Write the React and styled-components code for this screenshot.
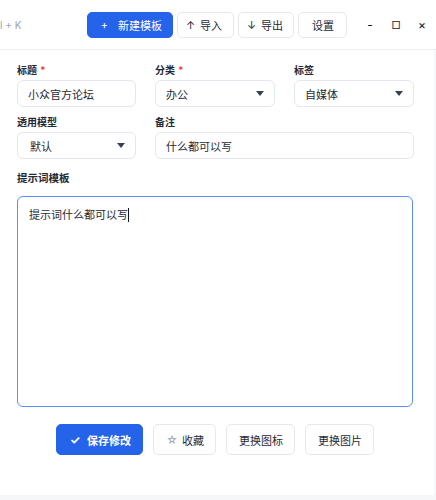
import React from 'react';
import styled, { createGlobalStyle } from 'styled-components';

const GlobalStyle = createGlobalStyle`
  html, body {
    margin: 0;
    padding: 0;
    background: #f6f7f9;
    font-family: "Inter", "Noto Sans CJK SC", sans-serif;
    color: #1f2937;
  }
`;

const Page = styled.div`
  width: 436px;
  height: 500px;
  display: flex;
  flex-direction: column;
  overflow: hidden;
`;

const TopBar = styled.div`
  height: 49px;
  flex-shrink: 0;
  display: flex;
  align-items: center;
  background: #ffffff;
  border-bottom: 1px solid #eceef2;
  overflow: hidden;
`;

const Shortcut = styled.span`
  width: 87px;
  flex-shrink: 0;
  font-size: 10px;
  color: #9ca3af;
  white-space: nowrap;
  padding-top: 1px;
`;

const ToolGroup = styled.div`
  display: flex;
  gap: 4px;
  flex-shrink: 0;
`;

const ToolButton = styled.button`
  height: 26px;
  box-sizing: border-box;
  flex-shrink: 0;
  white-space: nowrap;
  padding: 0 ${p => p.$right || 11}px 0 ${p => p.$left || 11}px;
  border-radius: 5px;
  border: 1px solid ${p => (p.$primary ? '#2563eb' : '#e5e8ee')};
  background: ${p => (p.$primary ? '#2563eb' : '#ffffff')};
  color: ${p => (p.$primary ? '#ffffff' : '#1f2937')};
  font-family: "Inter", "Noto Sans CJK SC", sans-serif;
  font-size: 11px;
  display: flex;
  align-items: center;
  gap: ${p => p.$gap || 8}px;
  cursor: pointer;
`;

const Glyph = styled.span`
  width: ${p => p.$w || 6}px;
  display: inline-flex;
  justify-content: center;
  font-size: ${p => p.$size || 11}px;
  color: ${p => p.$color || 'inherit'};
`;

const WinControls = styled.div`
  display: flex;
  align-items: center;
  margin-left: 10px;
  flex-shrink: 0;
`;

const WinButton = styled.span`
  width: 26px;
  text-align: center;
  font-size: ${p => p.$size || 12}px;
  color: #111827;
`;

const Panel = styled.div`
  width: 434px;
  height: 445px;
  background: #ffffff;
  padding: 13px 21px 0 17px;
  box-sizing: border-box;
  display: flex;
  flex-direction: column;
`;

const Grid = styled.div`
  display: grid;
  grid-template-columns: 119px 120px 120px;
  column-gap: 19px;
  row-gap: 8px;
`;

const Field = styled.div`
  display: flex;
  flex-direction: column;
  gap: 3px;
  grid-column: ${p => p.$span || 'auto'};
`;

const Label = styled.label`
  font-size: 10px;
  font-weight: 700;
  color: #1f2937;
  line-height: 14px;
`;

const Required = styled.span`
  color: #ef4444;
  margin-left: 3px;
`;

const InputBox = styled.div`
  height: 27px;
  box-sizing: border-box;
  border: 1px solid #e3e7ee;
  border-radius: 6px;
  display: flex;
  align-items: center;
  justify-content: space-between;
  padding: 0 10px 0 ${p => p.$indent || 10}px;
  font-size: 11px;
  color: #1f2937;
`;

const Caret = styled.span`
  width: 0;
  height: 0;
  border-left: 4px solid transparent;
  border-right: 4px solid transparent;
  border-top: 5px solid #374151;
`;

const SectionTitle = styled.div`
  margin-top: 12px;
  font-size: 10.5px;
  font-weight: 700;
  line-height: 16px;
`;

const PromptArea = styled.div`
  margin-top: 9px;
  width: 396px;
  height: 211px;
  box-sizing: border-box;
  border: 1px solid #5b8ff9;
  border-radius: 6px;
  padding: 9px 11px;
  font-size: 11px;
  line-height: 18px;
`;

const Cursor = styled.span`
  display: inline-block;
  width: 1px;
  height: 14px;
  background: #111827;
  vertical-align: -3px;
`;

const Actions = styled.div`
  margin-top: 17px;
  display: flex;
  justify-content: center;
  gap: 10px;
  width: 396px;
`;

const ActionButton = styled.button`
  height: 31px;
  box-sizing: border-box;
  white-space: nowrap;
  padding: 0 11px 0 12px;
  border-radius: 5px;
  border: 1px solid ${p => (p.$primary ? '#2563eb' : '#e5e8ee')};
  background: ${p => (p.$primary ? '#2563eb' : '#ffffff')};
  color: ${p => (p.$primary ? '#ffffff' : '#1f2937')};
  font-family: "Inter", "Noto Sans CJK SC", sans-serif;
  font-size: 11px;
  font-weight: ${p => (p.$primary ? 700 : 400)};
  display: flex;
  align-items: center;
  gap: ${p => p.$gap || 6}px;
`;

export default function App() {
  return (
    <>
      <GlobalStyle />
      <Page>
        <TopBar>
          <Shortcut>l + K</Shortcut>
          <ToolGroup>
            <ToolButton $primary $left={13} $right={10} $gap={10}>
              <Glyph $w={7}>+</Glyph>新建模板
            </ToolButton>
            <ToolButton $left={10} $right={11} $gap={7}>
              <Glyph $w={5}>↑</Glyph>导入
            </ToolButton>
            <ToolButton $left={10} $right={10} $gap={7}>
              <Glyph $w={5}>↓</Glyph>导出
            </ToolButton>
            <ToolButton $left={13} $right={12}>设置</ToolButton>
          </ToolGroup>
          <WinControls>
            <WinButton>-</WinButton>
            <WinButton $size={10}>□</WinButton>
            <WinButton>×</WinButton>
          </WinControls>
        </TopBar>

        <Panel>
          <Grid>
            <Field>
              <Label>标题<Required>*</Required></Label>
              <InputBox>小众官方论坛</InputBox>
            </Field>
            <Field>
              <Label>分类<Required>*</Required></Label>
              <InputBox>办公<Caret /></InputBox>
            </Field>
            <Field>
              <Label>标签</Label>
              <InputBox>自媒体<Caret /></InputBox>
            </Field>
            <Field>
              <Label>透用模型</Label>
              <InputBox $indent={12}>默认<Caret /></InputBox>
            </Field>
            <Field $span="span 2">
              <Label>备注</Label>
              <InputBox>什么都可以写</InputBox>
            </Field>
          </Grid>

          <SectionTitle>提示词模板</SectionTitle>
          <PromptArea>
            提示词什么都可以写<Cursor />
          </PromptArea>

          <Actions>
            <ActionButton $primary>
              <Glyph $w={12} $size={12}>✓</Glyph>保存修改
            </ActionButton>
            <ActionButton $gap={4}>
              <Glyph $w={12} $size={11} $color="#9ca3af">☆</Glyph>收藏
            </ActionButton>
            <ActionButton>更换图标</ActionButton>
            <ActionButton>更换图片</ActionButton>
          </Actions>
        </Panel>
      </Page>
    </>
  );
}
